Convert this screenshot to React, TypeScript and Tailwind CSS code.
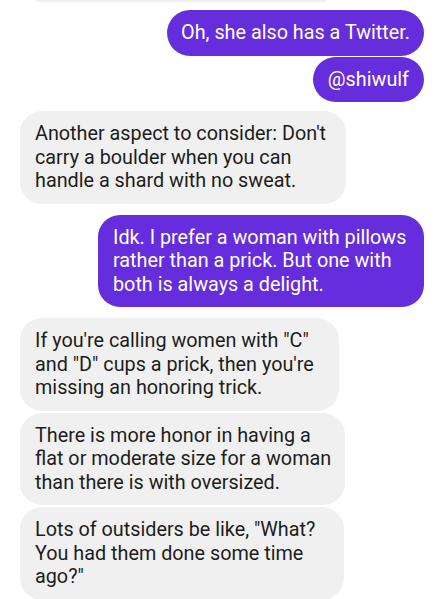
const incoming = "bg-[#f0f0f0] text-[#1d1d1d] self-start rounded-[22px]";
const outgoing = "bg-[#662ddc] text-white self-end rounded-[22px]";

function Lines({ lines }: { lines: string[] }) {
  return (
    <>
      {lines.map((l, i) => (
        <span key={i} className="block whitespace-nowrap">
          {l}
        </span>
      ))}
    </>
  );
}

export default function App() {
  return (
    <div className="w-[444px] h-[599px] overflow-hidden bg-white font-['Roboto','Liberation_Sans',sans-serif] text-[19.8px] leading-[23.5px] flex flex-col px-[20px]">
      {/* bottom edge of the previous bubble, scrolled off */}
      <div className="ml-[16px] w-[291px] h-[2px] shrink-0 bg-[#f0f0f0] rounded-b-[2px]" />

      <div className={`${outgoing} mt-[8px] px-[14px] py-[11px] rounded-full whitespace-nowrap`}>
        Oh, she also has a Twitter.
      </div>
      <div className={`${outgoing} mt-[1px] px-[15px] py-[11px] rounded-full`}>
        @shiwulf
      </div>

      <div className={`${incoming} mt-[9px] w-[326px] px-[15px] py-[11px]`}>
        <Lines lines={["Another aspect to consider: Don't", "carry a boulder when you can", "handle a shard with no sweat."]} />
      </div>

      <div className={`${outgoing} mt-[11px] w-[326px] px-[15px] py-[11px]`}>
        <Lines lines={["Idk. I prefer a woman with pillows", "rather than a prick. But one with", "both is always a delight."]} />
      </div>

      <div className={`${incoming} mt-[11px] w-[319px] px-[15px] py-[11px]`}>
        <Lines lines={['If you\'re calling women with "C"', 'and "D" cups a prick, then you\'re', "missing an honoring trick."]} />
      </div>
      <div className={`${incoming} mt-[2px] w-[325px] px-[15px] py-[11px]`}>
        <Lines lines={["There is more honor in having a", "flat or moderate size for a woman", "than there is with oversized."]} />
      </div>
      <div className={`${incoming} mt-[2px] w-[324px] px-[15px] py-[11px] shrink-0`}>
        <Lines lines={['Lots of outsiders be like, "What?', "You had them done some time", 'ago?"']} />
      </div>
    </div>
  );
}
